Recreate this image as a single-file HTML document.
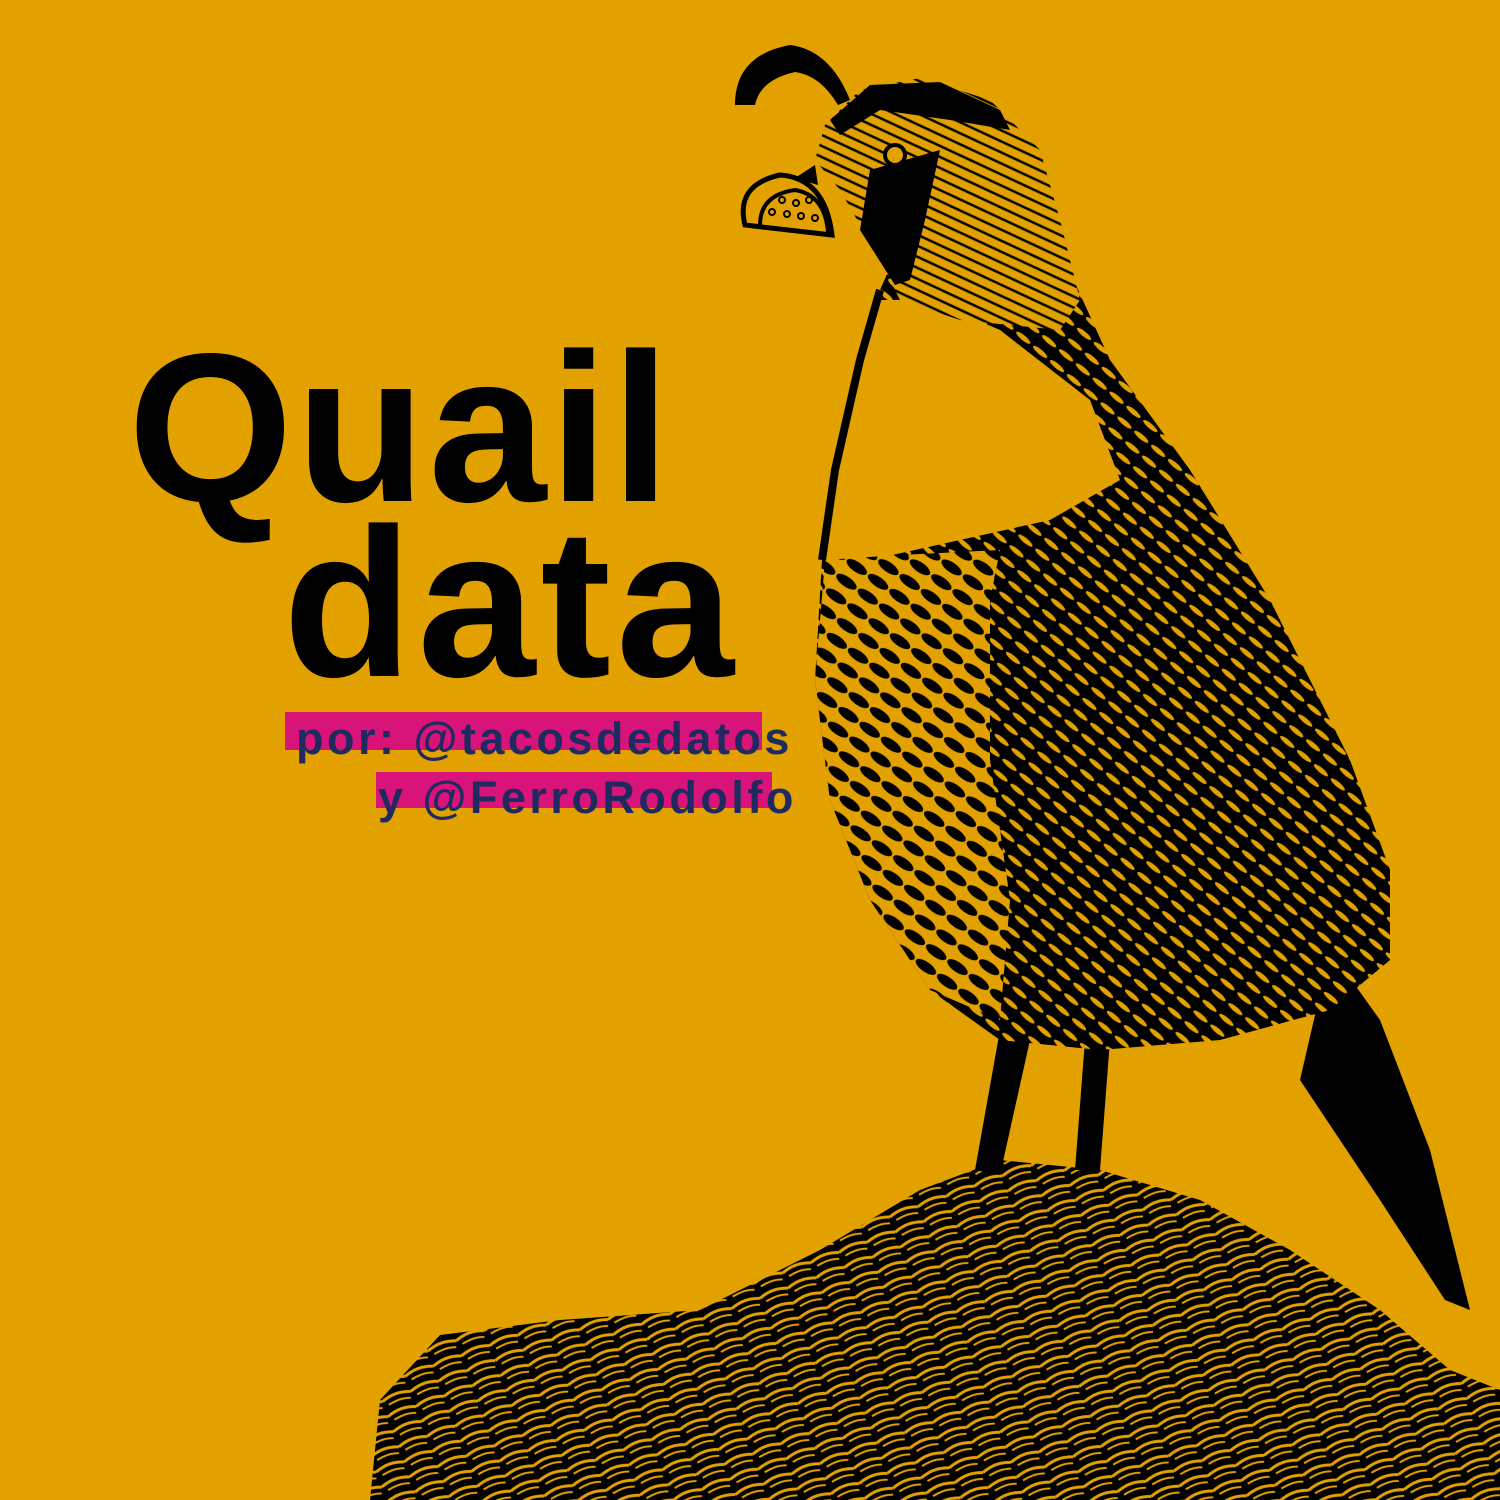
<!DOCTYPE html>
<html><head><meta charset="utf-8"><style>
html,body{margin:0;padding:0}
body{width:1500px;height:1500px;background:#E3A100;position:relative;overflow:hidden;font-family:"Liberation Sans",sans-serif}
.t{position:absolute;font-weight:bold;color:#000;line-height:1;white-space:nowrap}
.hl{position:absolute;background:#D8137A}
.s{position:absolute;font-weight:bold;color:#1F2B5E;font-size:45px;line-height:1;white-space:nowrap;letter-spacing:3.5px}
</style></head><body>
<svg width="1500" height="1500" style="position:absolute;left:0;top:0">
<defs>
<pattern id="h1" width="26" height="18" patternUnits="userSpaceOnUse" patternTransform="rotate(35)">
<rect width="26" height="18" fill="#E3A100"/><ellipse cx="13" cy="9" rx="12" ry="5" fill="#000"/></pattern>
<pattern id="h2" width="22" height="14" patternUnits="userSpaceOnUse" patternTransform="rotate(40)">
<rect width="22" height="14" fill="#000"/><ellipse cx="11" cy="7" rx="9" ry="2.5" fill="#E3A100"/></pattern>
<pattern id="h3" width="30" height="16" patternUnits="userSpaceOnUse" patternTransform="rotate(-20)">
<rect width="30" height="16" fill="#000"/><path d="M0 8 Q15 2 30 8" stroke="#E3A100" stroke-width="3" fill="none"/><path d="M5 13 Q18 10 28 14" stroke="#E3A100" stroke-width="2" fill="none"/></pattern>
<pattern id="h4" width="14" height="10" patternUnits="userSpaceOnUse" patternTransform="rotate(25)">
<rect width="14" height="10" fill="#E3A100"/><path d="M0 5 L14 5" stroke="#000" stroke-width="2.5"/></pattern>
</defs>
<path d="M370 1500 L380 1400 L440 1335 L560 1320 L700 1310 L820 1250 L920 1190 L1000 1160 L1100 1170 L1200 1200 L1290 1250 L1380 1310 L1450 1370 L1500 1390 L1500 1500 Z" fill="url(#h3)"/>
<path d="M1000 1030 L975 1170 L1000 1175 L1030 1040 Z" fill="#000"/>
<path d="M1085 1040 L1075 1170 L1100 1170 L1110 1040 Z" fill="#000"/>
<path d="M1330 950 L1380 1020 L1430 1150 L1470 1310 L1445 1300 L1380 1200 L1300 1080 Z" fill="#000"/>
<path d="M880 290 L860 360 L835 460 L822 560 L815 680 L830 800 L870 900 L930 990 L1000 1040 L1100 1050 L1220 1040 L1330 1010 L1390 960 L1390 870 L1350 760 L1270 600 L1190 470 L1110 360 L1060 250 L1040 160 L960 110 Z" fill="url(#h2)"/>
<path d="M880 300 L855 380 L835 480 L825 560 L870 560 L960 540 L1050 520 L1120 480 L1090 400 L1000 330 L930 300 Z" fill="#E3A100"/>
<path d="M825 560 L815 680 L830 800 L870 900 L930 990 L1000 1020 L1010 900 L990 760 L990 600 L1000 550 L900 555 Z" fill="url(#h1)"/>
<path d="M880 290 L860 360 L835 470 L822 560" stroke="#000" stroke-width="8" fill="none"/>
<path d="M825 125 L860 90 L920 78 L990 100 L1040 150 L1060 220 L1080 300 L1060 330 L960 320 L900 300 L880 260 L840 190 L815 160 Z" fill="url(#h4)"/>
<path d="M830 120 L870 85 L940 82 L1000 110 L1010 130 L950 120 L880 110 L840 135 Z" fill="#000"/>
<path d="M870 170 L940 150 L925 220 L910 280 L895 285 L860 230 Z" fill="#000"/>
<circle cx="895" cy="155" r="10" fill="#E3A100" stroke="#000" stroke-width="4"/>
<path d="M735 105 Q735 55 790 45 Q830 50 850 100 L838 105 Q820 75 795 72 Q760 80 755 105 Z" fill="#000"/>
<path d="M815 165 L795 178 L818 185 Z" fill="#000"/>
<path d="M745 225 Q735 185 780 175 Q825 178 832 235 Z" fill="#E3A100" stroke="#000" stroke-width="5"/>
<path d="M760 225 Q760 195 795 190 Q825 195 828 232" fill="none" stroke="#000" stroke-width="4"/>
<g fill="none" stroke="#000" stroke-width="2"><circle cx="782" cy="200" r="3"/><circle cx="796" cy="203" r="3"/><circle cx="809" cy="200" r="3"/><circle cx="772" cy="212" r="3"/><circle cx="787" cy="214" r="3"/><circle cx="801" cy="216" r="3"/><circle cx="815" cy="218" r="3"/></g>
</svg>
<div class="t" style="left:128px;top:322px;font-size:212px;letter-spacing:3px">Quail</div>
<div class="t" style="left:283px;top:497px;font-size:212px;letter-spacing:5px">data</div>
<div class="hl" style="left:285px;top:712px;width:477px;height:38px"></div>
<div class="hl" style="left:376px;top:772px;width:396px;height:36px"></div>
<div class="s" style="left:296px;top:716px">por: @tacosdedatos</div>
<div class="s" style="left:378px;top:775px">y @FerroRodolfo</div>
</body></html>
